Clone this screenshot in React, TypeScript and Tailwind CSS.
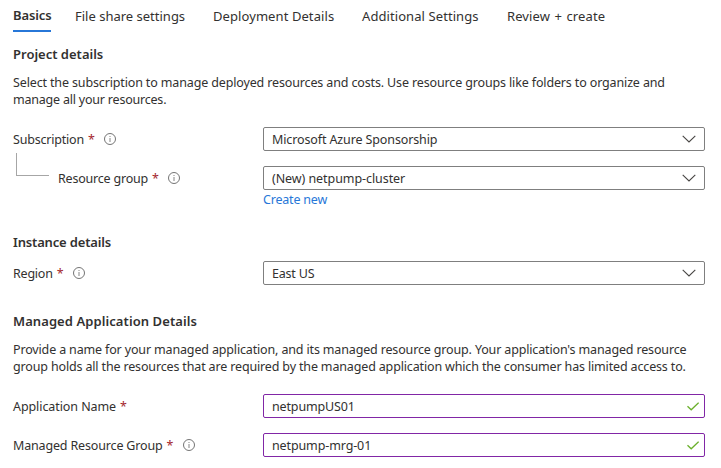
import type { ReactNode } from "react";

function InfoIcon() {
  return (
    <svg className="ml-2.5 shrink-0" width="12" height="12" viewBox="0 0 12 12" fill="none">
      <circle cx="6" cy="6" r="5.5" stroke="#747474" />
      <path d="M6 5v4M6 3v1" stroke="#858585" />
    </svg>
  );
}

function Chevron() {
  return (
    <svg width="14" height="8" viewBox="0 0 14 8" fill="none">
      <path d="M0.7 0.8L7 7L13.3 0.8" stroke="#484644" strokeWidth="1.1" />
    </svg>
  );
}

function Check() {
  return (
    <svg width="12" height="9" viewBox="0 0 12 9" fill="none">
      <path d="M0.5 4.3L4.2 7.8L11.6 0.7" stroke="#6bb02c" strokeWidth="1.3" />
    </svg>
  );
}

function Tab({ children, className }: { children: ReactNode; className: string }) {
  return (
    <button className={`h-8 shrink-0 whitespace-nowrap text-left text-[13px] leading-[31px] ${className}`}>
      {children}
    </button>
  );
}

function Label({ children, info, className = "" }: { children: ReactNode; info?: boolean; className?: string }) {
  return (
    <div className={`flex w-[250px] shrink-0 items-center whitespace-nowrap ${className}`}>
      {children}
      <span className="ml-1 w-[6px] text-[#a4262c]">*</span>
      {info && <InfoIcon />}
    </div>
  );
}

function Select({ children }: { children: ReactNode }) {
  return (
    <div className="flex h-6 w-[442px] items-center justify-between rounded-xs border border-[#7f7f7f] pr-2 pl-2">
      {children}
      <Chevron />
    </div>
  );
}

function Input({ children }: { children: ReactNode }) {
  return (
    <div className="flex h-6 w-[442px] items-center justify-between rounded-xs border border-[#8126a6] pr-[5px] pl-2">
      {children}
      <Check />
    </div>
  );
}

export default function App() {
  return (
    <main className="h-[468px] w-[721px] overflow-hidden bg-white pl-[13px] font-['Noto_Sans',sans-serif] text-[12.5px] leading-[17px] text-[#323130]">
      <nav className="flex h-8">
        <Tab className="w-[38px] border-b-2 border-[#2777d8] font-semibold tracking-[-0.1px]">Basics</Tab>
        <Tab className="ml-6 w-[110px]">File share settings</Tab>
        <Tab className="ml-7 w-[121px] tracking-[0.08px]">Deployment Details</Tab>
        <Tab className="ml-7 w-[117px] tracking-[0.08px]">Additional Settings</Tab>
        <Tab className="ml-7 w-[99px] tracking-[0.1px] [word-spacing:1px]">Review + create</Tab>
      </nav>

      <h2 className="mt-[14px] h-[17px] text-[13px] font-semibold">Project details</h2>
      <p className="mt-[11px] whitespace-nowrap">
        <span className="tracking-[-0.14px]">
          Select the subscription to manage deployed resources and costs. Use resource groups like folders to organize and
        </span>
        <br />
        <span className="tracking-[-0.21px]">manage all your resources.</span>
      </p>
      <div className="mt-[19px] flex h-6 items-center">
        <Label info><span className="tracking-[-0.2px]">Subscription</span></Label>
        <Select><span className="tracking-[-0.12px]">Microsoft Azure Sponsorship</span></Select>
      </div>
      <div className="relative mt-[15px] flex h-6 items-center">
        <div className="absolute top-[-13px] left-[3px] h-[23px] w-[33px] border-b border-l border-[#a6a6a6]" />
        <Label info className="pl-[45px]"><span className="tracking-[-0.2px]">Resource group</span></Label>
        <Select><span className="tracking-[-0.07px]">(New) netpump-cluster</span></Select>
      </div>
      <a className="mt-px ml-[250px] block h-[17px] tracking-[-0.2px] text-[#2777d8]">Create new</a>

      <h2 className="mt-[26px] h-[17px] text-[13px] font-semibold tracking-[-0.16px]">Instance details</h2>
      <div className="mt-[10px] flex h-6 items-center">
        <Label info><span className="tracking-[-0.22px]">Region</span></Label>
        <Select><span className="tracking-[-0.2px]">East US</span></Select>
      </div>

      <h2 className="mt-[28px] h-[17px] text-[13px] font-semibold tracking-[0.08px]">Managed Application Details</h2>
      <p className="mt-[11px] whitespace-nowrap tracking-[-0.153px]">
        Provide a name for your managed application, and its managed resource group. Your application's managed resource
        <br />
        group holds all the resources that are required by the managed application which the consumer has limited access to.
      </p>
      <div className="mt-[19px] flex h-6 items-center">
        <Label><span className="tracking-[-0.08px]">Application Name</span></Label>
        <Input><span className="tracking-[-0.15px]">netpumpUS01</span></Input>
      </div>
      <div className="mt-[15px] flex h-6 items-center">
        <Label info><span className="tracking-[-0.16px]">Managed Resource Group</span></Label>
        <Input><span className="tracking-[-0.12px]">netpump-mrg-01</span></Input>
      </div>
    </main>
  );
}
